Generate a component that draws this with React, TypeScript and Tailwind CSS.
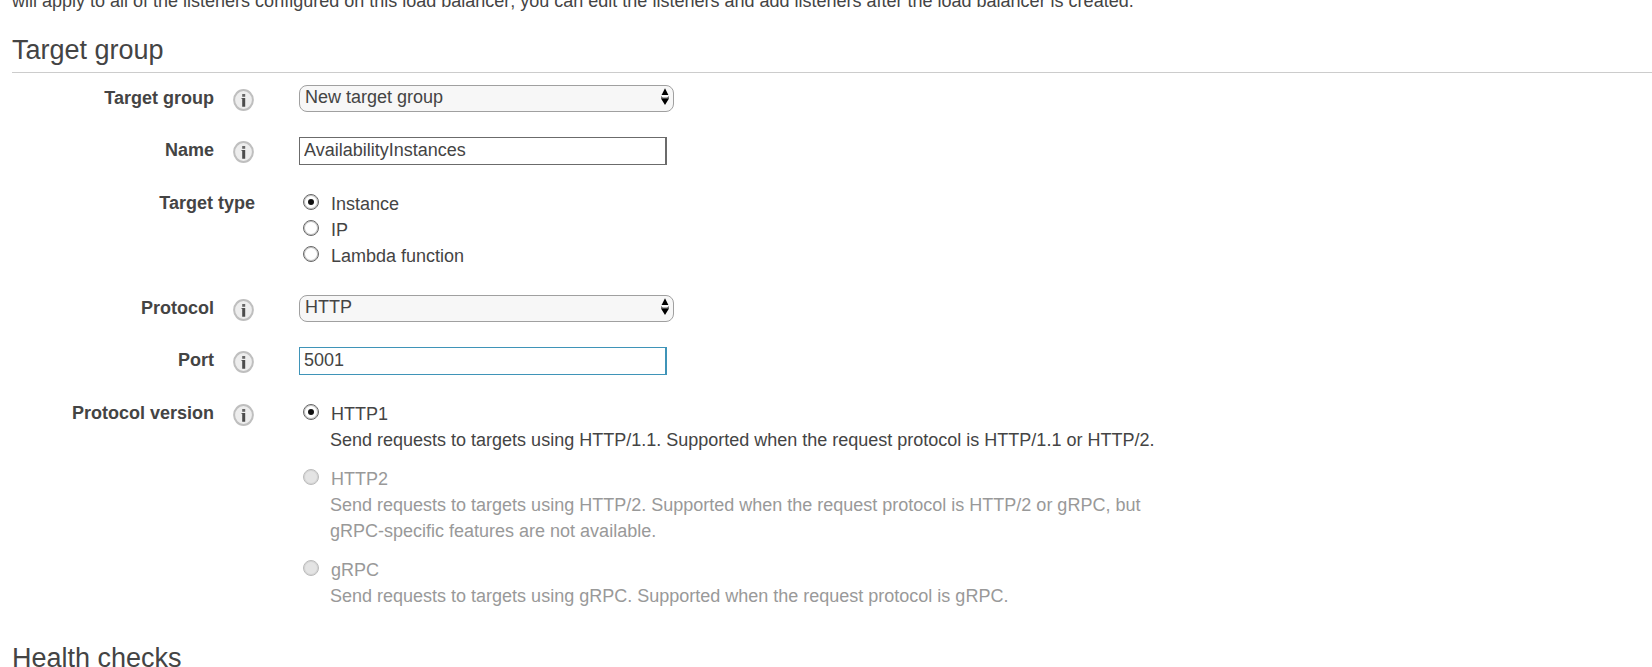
import { useState } from "react";
import type { ReactNode } from "react";

function InfoButton({ topic }: { topic: string }) {
  return (
    <button type="button" aria-label={`About ${topic}`} className="mt-1 mr-px shrink-0">
      <svg width="21" height="22" viewBox="0 0 21 22" className="block">
        <ellipse cx="10.5" cy="11" rx="9.4" ry="9.9" fill="#ededed" stroke="#bfbfbf" strokeWidth="2" />
        <rect x="9.2" y="5" width="3" height="2.8" fill="#666" />
        <path d="M8.4 9h3.8v8.8h-3v-8H8.4z" fill="#4c4c4c" />
      </svg>
    </button>
  );
}

function Row({
  label,
  htmlFor,
  info = true,
  children,
}: {
  label: string;
  htmlFor?: string;
  info?: boolean;
  children: ReactNode;
}) {
  return (
    <div className="flex min-h-7 items-start gap-11">
      <div
        className={`flex w-[255px] shrink-0 justify-end gap-[19px] pl-3 font-bold ${htmlFor ? "" : "pt-px"}`}
      >
        {htmlFor ? (
          <label htmlFor={htmlFor}>{label}</label>
        ) : (
          <span id={label.replace(" ", "-")}>{label}</span>
        )}
        {info && <InfoButton topic={label} />}
      </div>
      {children}
    </div>
  );
}

function Select({ id, options }: { id: string; options: string[] }) {
  return (
    <div className="relative w-[375px]">
      <select
        id={id}
        className="block h-[27px] w-full appearance-none rounded-lg border border-[#a0a0a0] bg-[#f7f7f7] pr-6 pb-[3px] pl-[5px] leading-[22px] outline-none"
      >
        {options.map((o) => (
          <option key={o}>{o}</option>
        ))}
      </select>
      <svg
        width="8"
        height="17"
        viewBox="0 0 8 17"
        className="pointer-events-none absolute top-[3px] right-[5px]"
      >
        <path d="M4 0.2 7.4 7H0.6z" fill="#000" />
        <path d="M0 8.2 1.8 9.8H6.2L8 8.2 7.7 11 4 17 0.3 11z" fill="#000" />
        <path d="M0 8.2 1.8 9.8H6.2L8 8.2 7.7 10.6H0.3z" fill="#888" />
      </svg>
    </div>
  );
}

function TextField({ id, initial, active = false }: { id: string; initial: string; active?: boolean }) {
  return (
    <input
      id={id}
      type="text"
      defaultValue={initial}
      className={`block h-7 w-[368px] rounded-none border border-r-2 bg-white px-1 pb-0.5 outline-none ${
        active ? "border-[#3f94b8]" : "border-[#6b6b6b]"
      }`}
    />
  );
}

function Radio({
  name,
  label,
  description,
  checked,
  disabled = false,
  onSelect,
}: {
  name: string;
  label: string;
  description?: string;
  checked: boolean;
  disabled?: boolean;
  onSelect: () => void;
}) {
  return (
    <div className={disabled ? "text-[#999]" : ""}>
      <label className="flex gap-3">
        <input
          type="radio"
          name={name}
          checked={checked}
          disabled={disabled}
          onChange={onSelect}
          className="mt-[3px] ml-1 grid size-4 shrink-0 appearance-none place-content-center rounded-full border border-[#666] bg-white ring-1 ring-[#666]/40 ring-inset before:size-1.5 before:rounded-full checked:before:bg-[#111] disabled:border-[#bbb] disabled:bg-[#e4e4e4] disabled:ring-[#bbb]/40"
        />
        {label}
      </label>
      {description && <p className="max-w-[871px] pl-[31px]">{description}</p>}
    </div>
  );
}

const targetTypes = ["Instance", "IP", "Lambda function"];

const versions = [
  {
    label: "HTTP1",
    description:
      "Send requests to targets using HTTP/1.1. Supported when the request protocol is HTTP/1.1 or HTTP/2.",
    disabled: false,
  },
  {
    label: "HTTP2",
    description:
      "Send requests to targets using HTTP/2. Supported when the request protocol is HTTP/2 or gRPC, but gRPC-specific features are not available.",
    disabled: true,
  },
  {
    label: "gRPC",
    description: "Send requests to targets using gRPC. Supported when the request protocol is gRPC.",
    disabled: true,
  },
];

export default function App() {
  const [targetType, setTargetType] = useState("Instance");
  const [version, setVersion] = useState("HTTP1");

  return (
    <main className="-mt-3 overflow-hidden bg-white font-['Liberation_Sans',Arial,sans-serif] text-[18px] leading-[26px] text-[#444]">
      <p className="pl-3">
        will apply to all of the listeners configured on this load balancer; you can edit the listeners and add
        listeners after the load balancer is created.
      </p>

      <h2 className="mt-[18px] ml-3 border-b border-[#ccc] pb-1 text-[27px] leading-9">Target group</h2>
      <form className="mt-3 flex flex-col gap-6">
        <Row label="Target group" htmlFor="target-group">
          <Select id="target-group" options={["New target group", "Existing target group"]} />
        </Row>
        <Row label="Name" htmlFor="name">
          <TextField id="name" initial="AvailabilityInstances" />
        </Row>
        <Row label="Target type" info={false}>
          <div role="radiogroup" aria-labelledby="Target-type" className="py-0.5">
            {targetTypes.map((t) => (
              <Radio
                key={t}
                name="target-type"
                label={t}
                checked={targetType === t}
                onSelect={() => setTargetType(t)}
              />
            ))}
          </div>
        </Row>
        <Row label="Protocol" htmlFor="protocol">
          <Select id="protocol" options={["HTTP", "HTTPS"]} />
        </Row>
        <Row label="Port" htmlFor="port">
          <TextField id="port" initial="5001" active />
        </Row>
        <Row label="Protocol version">
          <div role="radiogroup" aria-labelledby="Protocol-version" className="flex flex-col gap-[13px] py-0.5">
            {versions.map((v) => (
              <Radio
                key={v.label}
                name="protocol-version"
                label={v.label}
                description={v.description}
                disabled={v.disabled}
                checked={version === v.label}
                onSelect={() => setVersion(v.label)}
              />
            ))}
          </div>
        </Row>
      </form>

      <h2 className="mt-[29px] ml-3 border-b border-[#ccc] pb-1 text-[27px] leading-9">Health checks</h2>
    </main>
  );
}
